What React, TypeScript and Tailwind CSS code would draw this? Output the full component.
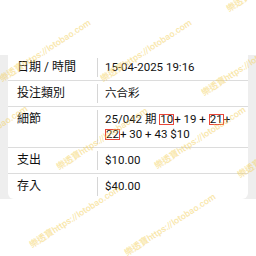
function Box({ children }: { children: React.ReactNode }) {
  return (
    <span className="inline-block border-[1.5px] border-[#e8473a] leading-[9px]">{children}</span>
  );
}

const marks = [
  { x: 3, y: 84 },
  { x: 104, y: 84 },
  { x: 205, y: 98 },
  { x: 230, y: 14 },
  { x: 60, y: 172 },
  { x: 158, y: 171 },
  { x: 241, y: 180 },
  { x: 33, y: 250 },
  { x: 128, y: 258 },
  { x: -60, y: 170 },
];

export default function App() {
  const data = [
    { label: '日期 / 時間', value: '15-04-2025 19:16' },
    { label: '投注類別', value: '六合彩' },
    {
      label: '細節',
      value: (
        <>
          25/042 期 <Box>10</Box>+ 19 + <Box>21</Box>+ <Box>22</Box>+ 30 + 43 $10
        </>
      ),
    },
    { label: '支出', value: '$10.00' },
    { label: '存入', value: '$40.00' },
  ];

  return (
    <div
      className="relative w-[256px] h-[256px] overflow-hidden bg-white text-[11.5px] leading-[15px] text-[#111111]"
      style={{ fontFamily: 'Roboto, "Noto Sans CJK TC", sans-serif' }}
    >
      <div className="h-[55px]" />
      <div className="flex bg-[#eeeeee] px-2">
        <div className="flex-1 bg-white rounded-b-md">
          {data.map((r, i) => (
            <div
              key={r.label}
              className={`flex ${i < data.length - 1 ? 'border-b border-[#dcdcdc]' : ''}`}
            >
              <div className="w-[89px] shrink-0 pl-[9px] py-[5px] text-[12px]">{r.label}</div>
              <div className="flex-1 my-[3px] border-l border-[#d6d6d6] pl-[7px] pr-[8px] py-[2px]">
                {r.value}
              </div>
            </div>
          ))}
        </div>
      </div>

      {/* watermark */}
      {marks.map((m, i) => (
        <span
          key={i}
          className="absolute whitespace-nowrap origin-bottom-left -rotate-[33deg] text-[9px] leading-[10px] font-semibold text-[#f3cf5c]/50 pointer-events-none"
          style={{ left: m.x, top: m.y - 10 }}
        >
          樂透寶https://lotobao.com
        </span>
      ))}
    </div>
  );
}
